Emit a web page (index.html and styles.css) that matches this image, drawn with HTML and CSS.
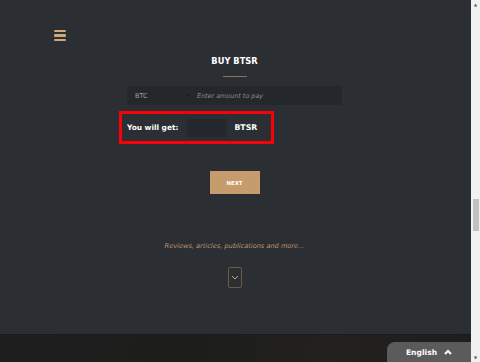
FILE: index.html
```html
<!DOCTYPE html>
<html lang="en">
<head>
  <meta charset="UTF-8" />
  <meta name="viewport" content="width=device-width, initial-scale=1.0" />
  <title>Buy BTSR</title>
  <link rel="stylesheet" href="styles.css">
</head>
<body>
  <div class="page">
    <div class="main">
      <header class="topbar">
        <button class="burger" aria-label="Menu"><span></span><span></span><span></span></button>
      </header>

      <section class="buy">
        <h2>BUY BTSR</h2>
        <div class="rule"></div>
        <div class="form">
          <div class="pay-row">
            <div class="coin">BTC <span class="caret">&#9662;</span></div>
            <div class="amount">Enter amount to pay</div>
          </div>
          <div class="get-box">
            <span class="get-label">You will get:</span>
            <span class="get-value"></span>
            <span class="get-unit">BTSR</span>
          </div>
        </div>
        <button class="next">NEXT</button>
      </section>

      <section class="press">
        <p>Reviews, articles, publications and more...</p>
        <button class="scroll-down" aria-label="Scroll down">
          <svg width="8" height="5" viewBox="0 0 8 5"><path d="M1 1 L4 4 L7 1" fill="none" stroke="#c9a57c" stroke-width="1"/></svg>
        </button>
      </section>

      <footer class="footer"></footer>

      <div class="lang">English
        <svg width="8" height="6" viewBox="0 0 8 6"><path d="M1 5 L4 2 L7 5" fill="none" stroke="#fff" stroke-width="2"/></svg>
      </div>
    </div>

    <div class="scrollbar">
      <span class="sb-arrow">&#9650;</span>
      <div class="sb-track"><div class="sb-thumb"></div></div>
      <span class="sb-arrow">&#9660;</span>
    </div>
  </div>
</body>
</html>
```

FILE: styles.css
```css
html, body {
  margin: 0; padding: 0; height: 100%;
  font-family: "DejaVu Sans", sans-serif;
  overflow: hidden;
}
body { background: #2b2f34; }

.page {
  display: flex;
  height: 362px;
}
.main {
  position: relative;
  flex: 1;
  display: flex;
  flex-direction: column;
  background: #2b2f34;
}

.topbar {
  padding: 30px 0 0 54px;
  height: 11px;
}
.burger {
  display: flex; flex-direction: column; gap: 2px;
  padding: 0; border: none; background: none;
  width: 12px;
}
.burger span {
  display: block;
  height: 2.4px;
  background: #d2a777;
  border-radius: 1px;
}

.buy {
  display: flex; flex-direction: column; align-items: center;
  padding-right: 2px;
}
.buy h2 {
  margin: 15px 0 0;
  font-size: 8.3px;
  line-height: 11px;
  font-weight: bold;
  color: #fff;
}
.rule {
  width: 24px; height: 1px;
  margin-top: 9px;
  background: #8f7357;
}
.form {
  width: 215px;
  margin-top: 9px;
}
.pay-row {
  display: flex; align-items: center;
  height: 19px;
  background: #24282c;
  font-size: 6.4px;
}
.coin {
  width: 62px;
  padding-left: 8px;
  color: #a2a3a5;
  display: flex; justify-content: space-between;
}
.caret { font-size: 5px; color: #15171a; padding-right: 8px; }
.amount {
  color: #8a8c8f;
  font-style: italic;
}
.get-box {
  display: flex; align-items: center;
  width: 155px; height: 33px;
  margin: 6px 0 0 -8px;
  box-sizing: border-box;
  border: 3px solid #fb0009;
  padding-left: 5px;
  color: #fff;
  font-weight: bold;
  font-size: 7.4px;
}
.get-value {
  width: 40px; height: 18px;
  margin: 0 7px 0 9px;
  background: #24282c;
}
.get-unit { font-size: 7.8px; }

.next {
  margin-top: 27px;
  width: 50px; height: 23px;
  border: none;
  background: #c69c6d;
  color: #fff;
  font-family: "DejaVu Sans", sans-serif;
  font-weight: bold;
  font-size: 5.4px;
  padding: 0;
}

.press {
  display: flex; flex-direction: column; align-items: center;
  padding-right: 2px;
}
.press p {
  margin: 48px 0 0;
  font-size: 6.6px;
  line-height: 8px;
  font-style: italic;
  color: #b8946b;
}
.scroll-down {
  margin-top: 17px;
  width: 14px; height: 21px;
  border: 1px solid #6d5b48;
  border-radius: 2px;
  background: none;
  padding: 0;
  display: flex; align-items: center; justify-content: center;
}

.footer {
  margin-top: auto;
  height: 27px;
  border-top: 1px solid #1b1b1b;
  background: linear-gradient(100deg, #201f1f, #1d1d1c 40%, #222120 70%, #1e1e1d);
}

.lang {
  position: absolute; right: 0; bottom: 0;
  width: 84px; height: 20px;
  background: #5b5b5b;
  border-radius: 8px 0 0 0;
  color: #fff;
  font-weight: bold;
  font-size: 7.6px;
  display: flex; align-items: center; justify-content: center; gap: 7px;
}

.scrollbar {
  width: 9px;
  background: #f1f1f1;
  display: flex; flex-direction: column; align-items: center;
}
.sb-arrow {
  font-size: 4px;
  line-height: 9px;
  color: #505050;
}
.sb-track {
  flex: 1;
  width: 100%;
}
.sb-thumb {
  width: 6px;
  height: 32px;
  margin: 190px 0 0 2px;
  background: #c1c1c1;
}
```
